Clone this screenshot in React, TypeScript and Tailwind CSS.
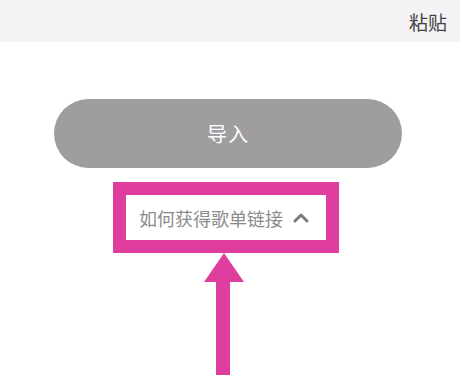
import React from "react";

const font = { fontFamily: '"Noto Sans CJK SC", "Noto Sans", sans-serif' };

export default function App() {
  return (
    <div className="w-[460px] h-[375px] bg-white overflow-hidden" style={font}>
      <div className="h-[42px] bg-[#f4f2f5] flex items-center justify-end pr-[13px]">
        <span className="text-[19px] leading-none text-[#444444]">粘贴</span>
      </div>

      <div className="mt-[57px] ml-[54px] w-[348px] h-[69px] rounded-full bg-[#9f9d9f] flex items-center justify-center">
        <span className="text-[20px] leading-none text-white tracking-[1px]">导入</span>
      </div>

      <div className="mt-[14px] ml-[113px] w-[226px] h-[71px] border-[13px] border-[#e03e9e] bg-white flex items-center pl-[13px] gap-[10px]">
        <span className="text-[18px] leading-none text-[#8c8c8c]">如何获得歌单链接</span>
        <svg width="16" height="11" viewBox="0 0 16 11" fill="none">
          <path d="M2 9 L8 3 L14 9" stroke="#7a7a7a" strokeWidth="3" strokeLinecap="round" strokeLinejoin="round" />
        </svg>
      </div>

      <div className="ml-[204px]">
        <svg width="40" height="122" viewBox="0 0 40 122">
          <polygon points="20,0 40,29 0,29" fill="#e03e9e" />
          <rect x="12" y="28" width="14" height="94" fill="#e03e9e" />
        </svg>
      </div>
    </div>
  );
}
